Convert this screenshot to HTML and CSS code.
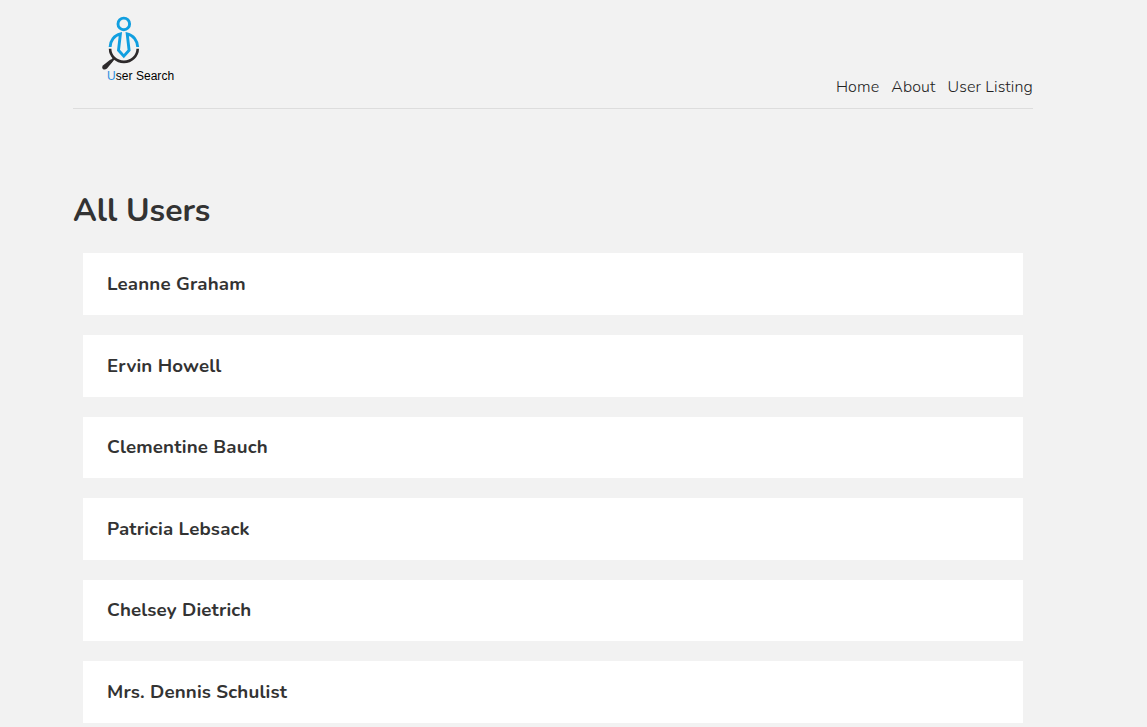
FILE: index.html
```html
<!DOCTYPE html>
<html lang="en">
<head>
<meta charset="utf-8">
<title>User Search</title>
<link rel="stylesheet" href="styles.css">
</head>
<body>
<div class="container">
  <header class="header">
    <a class="logo">
      <svg class="logo-mark" width="40" height="56" viewBox="0 0 40 56" fill="none">
        <g stroke="#119fe0" stroke-width="2.9">
          <circle cx="21.8" cy="8.9" r="5.8"/>
          <path d="M8.1 32C8.3 25.6 12.2 20.3 18.4 18.9L16.5 35.3L21.8 41.2L27.1 35.3L25.2 18.9C31.4 20.3 35.5 25.6 35.7 32"/>
        </g>
        <path d="M8.1 33.8A13.8 13.1 0 0 0 35.7 33.8" stroke="#2d2a2b" stroke-width="2.6"/>
        <path d="M12.6 42.8L8 47.4" stroke="#2d2a2b" stroke-width="2.4"/>
        <path d="M8.5 44.4L10.8 46.6L5 53.5Q2.8 55.2 .8 53.9Q-.6 52 1.2 50.2Z" fill="#2d2a2b"/>
      </svg>
      <span class="logo-text"><span class="logo-initial">U</span>ser Search</span>
    </a>
    <nav class="nav"><a class="nav-home">Home</a><a class="nav-about">About</a><a class="nav-listing">User Listing</a></nav>
  </header>
  <main>
    <h1 class="title">All Users</h1>
    <ul class="users">
      <li class="user">Leanne Graham</li>
      <li class="user">Ervin Howell</li>
      <li class="user">Clementine Bauch</li>
      <li class="user">Patricia Lebsack</li>
      <li class="user">Chelsey Dietrich</li>
      <li class="user">Mrs. Dennis Schulist</li>
    </ul>
  </main>
</div>
</body>
</html>
```
FILE: styles.css
```css
* { box-sizing: border-box; }
body {
  margin: 0;
  height: 727px;
  overflow: hidden;
  background: #f2f2f2;
  color: #333;
  font-family: Nunito, Lato, sans-serif;
}
.container { width: 960px; margin-left: 73px; }
.header {
  display: flex;
  justify-content: space-between;
  height: 109px;
  padding-top: 15px;
  border-bottom: 1px solid #ddd;
}
.logo { display: flex; flex-direction: column; padding-left: 29px; }
.logo-mark { display: block; }
.logo-text {
  margin: -2px 0 0 5px;
  color: #000;
  font: 12px/14px "Liberation Sans", Arial, sans-serif;
  letter-spacing: 0.04px;
  white-space: nowrap;
}
.logo-initial { color: #2e8fe0; }
.nav {
  display: flex;
  gap: 12px;
  padding-top: 61px;
  color: #222;
  font-size: 16px;
  line-height: 22px;
  font-weight: 350;
  letter-spacing: 0.12px;
}
.title { margin: 80px 0 0; font-size: 32px; line-height: 44px; font-weight: 700; }
.users {
  display: grid;
  gap: 20px;
  margin: 20.35px 10px 0;
  padding: 0;
  list-style: none;
}
.user {
  height: 61.6px;
  padding: 18.6px 24px 0;
  background: #fff;
  font-size: 18.72px;
  line-height: 25.6px;
  font-weight: 660;
  letter-spacing: 0.16px;
}
```
